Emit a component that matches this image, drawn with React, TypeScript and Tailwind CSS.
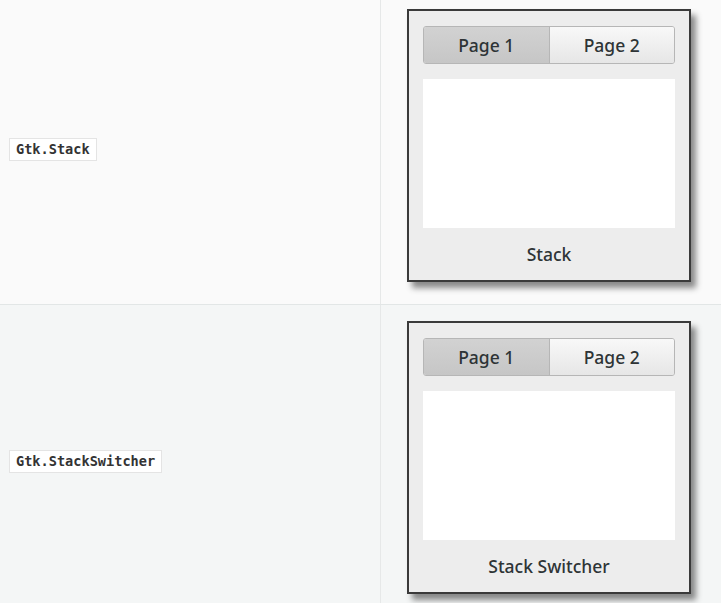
import { FC } from 'react';

const ui = { fontFamily: '"Noto Sans", "Open Sans", sans-serif' };
const mono = { fontFamily: '"DejaVu Sans Mono", "Liberation Mono", monospace' };

// small GTK-style window with a stack switcher on top
const StackWindow: FC<{ label: string }> = ({ label }) => (
  <div
    className="w-[284px] h-[273px] bg-[#ededed] border-2 border-[#3a3a3a] shadow-[5px_6px_6px_rgba(0,0,0,0.45)] px-[14px] pt-[15px] flex flex-col"
    style={ui}
  >
    <div className="flex h-[38px] rounded-[3px] border border-[#b6b6b6] overflow-hidden text-[17.5px] font-medium text-[#2e3436]">
      <div className="flex-1 flex items-center justify-center bg-gradient-to-b from-[#d2d2d2] to-[#c6c6c6] border-r border-[#b6b6b6]">
        Page 1
      </div>
      <div className="flex-1 flex items-center justify-center bg-gradient-to-b from-[#f8f8f8] to-[#e6e6e6]">
        Page 2
      </div>
    </div>
    <div className="mt-[15px] h-[149px] bg-white" />
    <div className="flex-1 flex items-center justify-center text-[17.5px] font-medium text-[#2e3436]">
      {label}
    </div>
  </div>
);

const Row: FC<{ name: string; label: string; bg: string; top: string; h: string; shift: string }> = ({
  name,
  label,
  bg,
  top,
  h,
  shift,
}) => (
  <div className={`flex ${bg} ${h}`}>
    <div className="w-[381px] border-r border-[#e6e8e8] flex items-center pl-[9px]">
      <code
        className={`bg-white border border-[#e4e4e4] px-[6px] h-[23px] flex items-center text-[13.6px] font-bold text-[#333] ${shift}`}
        style={mono}
      >
        {name}
      </code>
    </div>
    <div className={`flex-1 pl-[26px] ${top}`}>
      <StackWindow label={label} />
    </div>
  </div>
);

const App: FC = () => (
  <div className="w-[721px] h-[603px] overflow-hidden bg-[#f4f6f6]">
    <Row name="Gtk.Stack" label="Stack" bg="bg-[#fafafa]" top="pt-[9px]" h="h-[304px]" shift="mb-[5px]" />
    <div className="h-px bg-[#e2e6e6]" />
    <Row
      name="Gtk.StackSwitcher"
      label="Stack Switcher"
      bg="bg-[#f4f6f6]"
      top="pt-[16px]"
      h="h-[298px]"
      shift="mt-[15px]"
    />
  </div>
);

export default App;
